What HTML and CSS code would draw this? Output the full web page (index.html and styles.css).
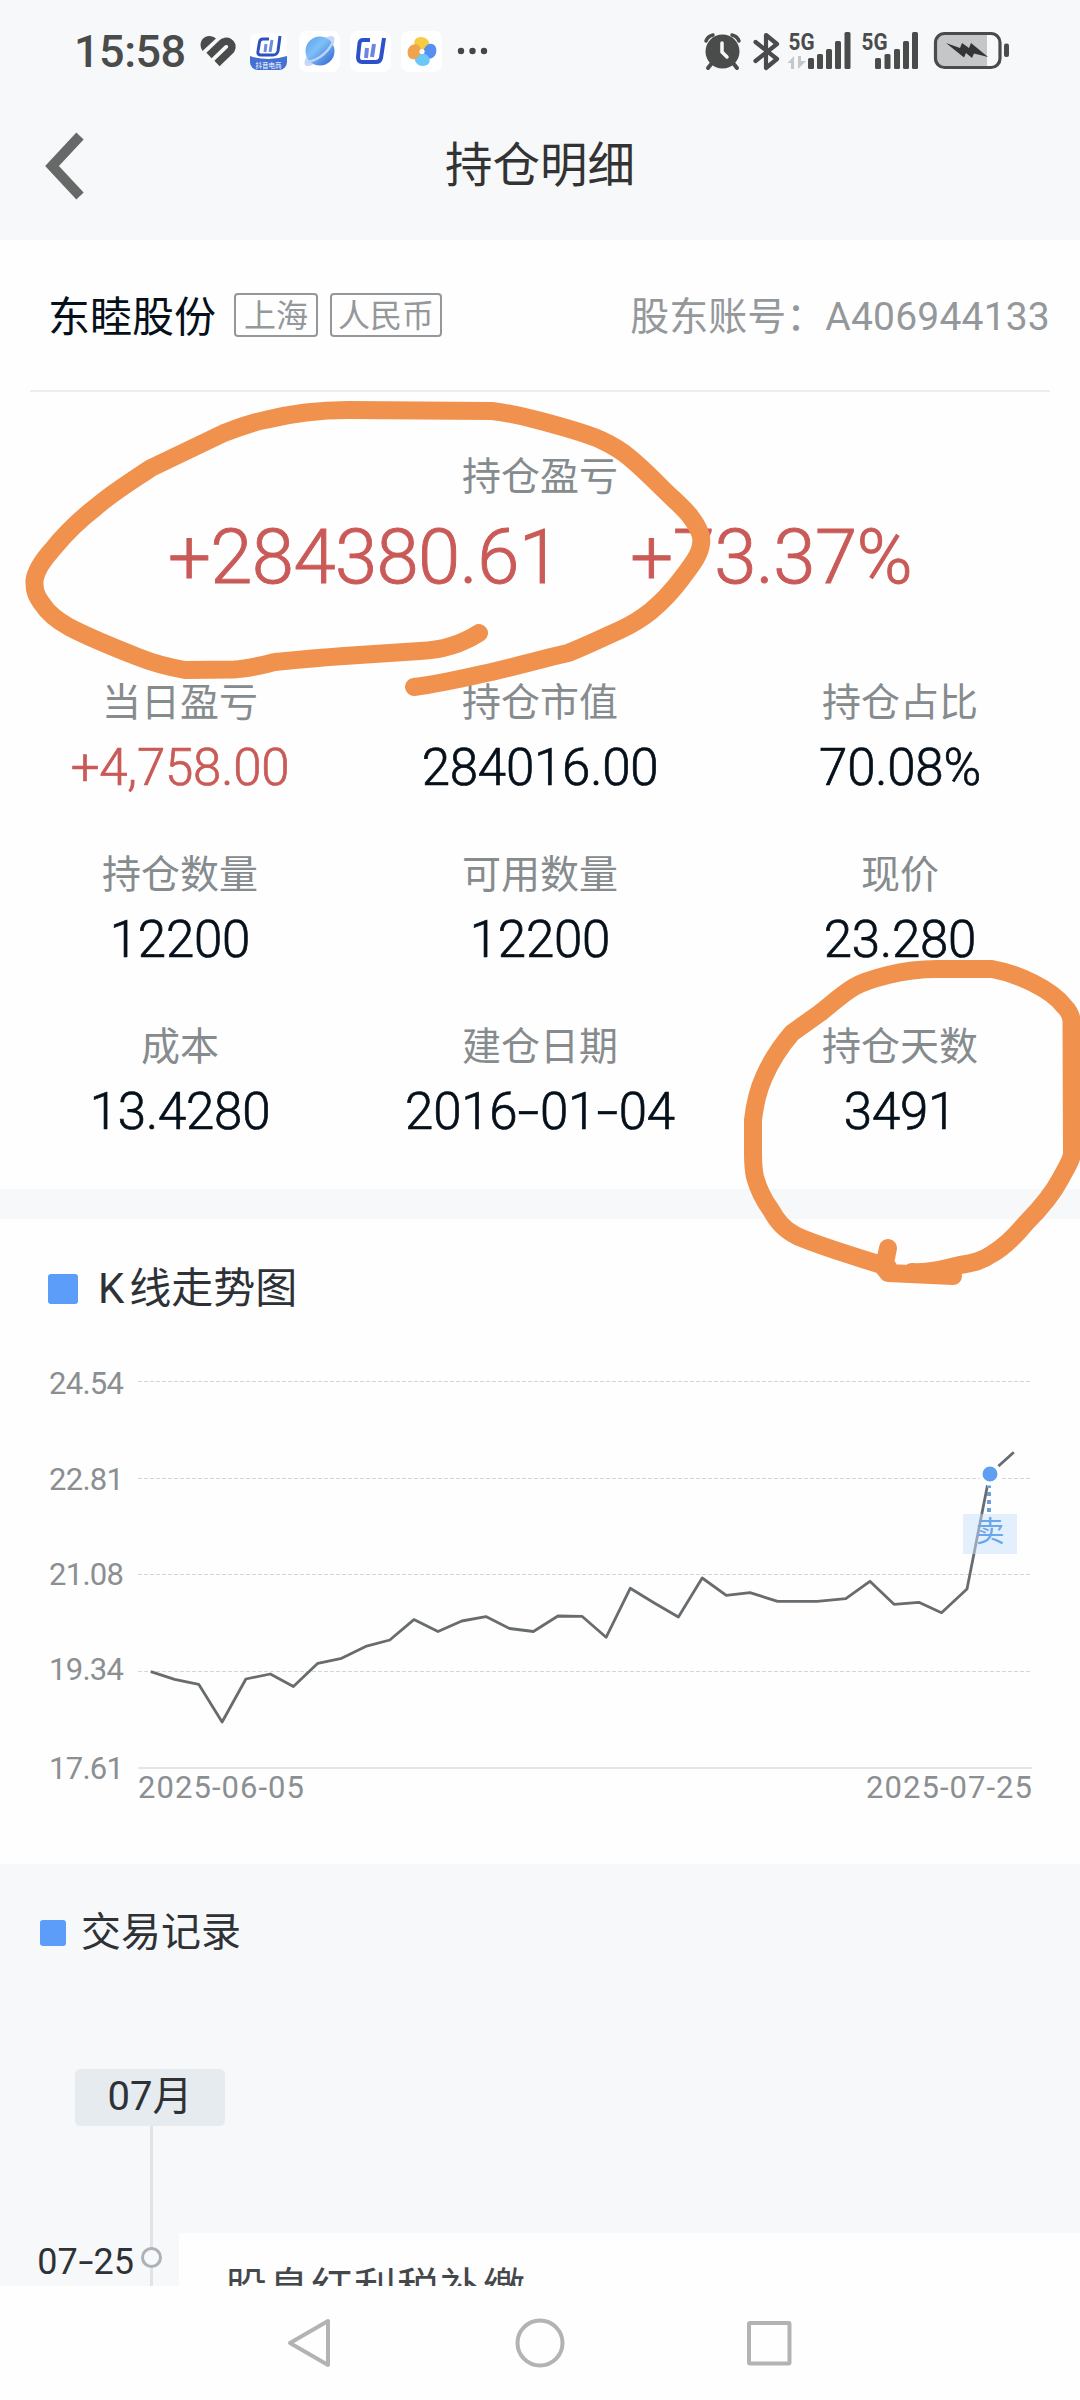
FILE: index.html
```
<!DOCTYPE html>
<html lang="zh-CN">
<head>
    <meta charset="UTF-8">
    <meta name="viewport" content="width=device-width, initial-scale=1.0">
    <title>持仓明细</title>
    <link rel="stylesheet" href="styles.css">
</head>
<body>

<div class="phone">
    <div class="status-bar">
        <span class="clock">15:58</span>
        <svg class="status-left" width="292" height="44" viewBox="198 29 292 44">
            <defs>
                <linearGradient id="planet" x1="0" y1="0" x2="1" y2="1">
                    <stop offset="0" stop-color="#5ba0ea"/>
                    <stop offset=".4" stop-color="#7fc0f7"/>
                    <stop offset="1" stop-color="#2a62cf"/>
                </linearGradient>
                <clipPath id="shop"><rect x="250" y="33" width="37" height="37" rx="8"/></clipPath>
            </defs>
            <!-- heart -->
            <path d="M209 55.500 L221 44 C226 38 235 43 231 50 L217 63.500" fill="none" stroke="#4a4b4b" stroke-width="7.500"/>
            <path d="M202.500 51 C197.500 43 203 36 209 36 C212 36 214 37 216 38.500 Z" fill="#4a4b4b"/>
            <!-- shop app -->
            <g clip-path="url(#shop)">
                <rect x="250" y="33" width="37" height="37" fill="#fff"/>
                <path d="M250 56 Q268 62 287 56 V70 H250Z" fill="#4470d3"/>
            </g>
            <path d="M269 39 H263 Q260 39 259.500 42 L258 51 Q257 55 261 55 H273 Q277 55 278 51 L280 36" fill="none" stroke="#2d52bd" stroke-width="3"/>
            <path d="M266 44 L265 52 M272 40 L270 52" stroke="#6f8ddd" stroke-width="3"/>
            <text class="shop-name" x="268.500" y="67.500">抖音电商</text>
            <!-- browser app -->
            <rect x="299" y="31" width="41" height="41" rx="8" fill="#fff"/>
            <ellipse cx="319.500" cy="51" rx="20" ry="7" transform="rotate(-45 319.500 51)" fill="#c9d6f6"/>
            <circle cx="320" cy="51" r="14.500" fill="url(#planet)"/>
            <path d="M308 62 Q325 58 333 42" fill="none" stroke="#bcd3fa" stroke-width="2.500"/>
            <!-- work app -->
            <rect x="350" y="31" width="41" height="41" rx="8" fill="#fff"/>
            <path d="M370 40 H363 Q360 40 359.500 43 L358 57 Q358 62 362 62 H376 Q380 62 381 58 L384 38" fill="none" stroke="#2d50cb" stroke-width="4"/>
            <path d="M367 48 L366 58 M374 44 L372 57" stroke="#6b85e0" stroke-width="4"/>
            <!-- pinwheel app -->
            <rect x="401" y="31" width="41" height="41" rx="8" fill="#fff"/>
            <path d="M421 50 C414 48 412 41 417 38 C424 35 431 40 429 47 C427 50 423 51 421 50Z" fill="#f8cb45"/>
            <path d="M421 50 C414 48 412 41 417 38 C424 35 431 40 429 47 C427 50 423 51 421 50Z" transform="rotate(90 422 51.500)" fill="#558ff0"/>
            <path d="M421 50 C414 48 412 41 417 38 C424 35 431 40 429 47 C427 50 423 51 421 50Z" transform="rotate(180 422 51.500)" fill="#6cc8f8"/>
            <path d="M421 50 C414 48 412 41 417 38 C424 35 431 40 429 47 C427 50 423 51 421 50Z" transform="rotate(270 422 51.500)" fill="#f0a34c"/>
            <circle cx="422" cy="51.500" r="2.600" fill="#fff"/>
            <!-- more -->
            <g fill="#454646"><circle cx="461" cy="51" r="3.200"/><circle cx="472.500" cy="51" r="3.200"/><circle cx="484" cy="51" r="3.200"/></g>
        </svg>
        <svg class="status-right" width="310" height="44" viewBox="702 29 310 44">
            <!-- alarm -->
            <g fill="none" stroke="#4a4b4b" stroke-width="4" stroke-linecap="round">
                <path d="M712 63 L708 68 M733 63 L737 68"/>
                <path d="M706 41 Q708 36 713 35 M732 35 Q737 36 739 41" stroke-width="3.500"/>
            </g>
            <circle cx="722.500" cy="51.500" r="17" fill="#4a4b4b"/>
            <path d="M722 43 V52 L727 57" fill="none" stroke="#f6f7f9" stroke-width="3.500" stroke-linecap="round"/>
            <!-- bluetooth -->
            <path d="M755.500 42 L777 59 L766 68 V35 L777 44 L755.500 61" fill="none" stroke="#4a4b4b" stroke-width="4.200" stroke-linejoin="round" stroke-linecap="round"/>
            <!-- signal -->
            <g class="signal">
                <text x="788.500" y="50" textLength="26" lengthAdjust="spacingAndGlyphs">5G</text>
                <text x="861.500" y="50" textLength="26" lengthAdjust="spacingAndGlyphs">5G</text>
                <rect x="808" y="58" width="6" height="11" rx="1.500"/>
                <rect x="817" y="54" width="6" height="15" rx="1.500"/>
                <rect x="826" y="49" width="6" height="20" rx="1.500"/>
                <rect x="835" y="41" width="6" height="28" rx="1.500"/>
                <rect x="844.500" y="32" width="6" height="37" rx="1.500"/>
                <rect x="875" y="58" width="6" height="11" rx="1.500"/>
                <rect x="884.500" y="54" width="6" height="15" rx="1.500"/>
                <rect x="894" y="49" width="6" height="20" rx="1.500"/>
                <rect x="903" y="41" width="6" height="28" rx="1.500"/>
                <rect x="912" y="32" width="6" height="37" rx="1.500"/>
            </g>
            <path d="M787.500 63 L794 56 V69 H791 V63Z M798 56 H801 V61 H806 L798 69Z" fill="#c5c6c7"/>
            <!-- battery -->
            <path d="M945 33.500 H987 V67.500 H945 Q936 67.500 936 58 V43 Q936 33.500 945 33.500Z" fill="#c5c6c7"/>
            <rect x="935.500" y="33.500" width="64.500" height="34" rx="9" fill="none" stroke="#4a4b4b" stroke-width="3.200"/>
            <rect x="1004" y="43.500" width="5" height="13.500" rx="2" fill="#4a4b4b"/>
            <path d="M946 43 L960 48 L962 43 L969 48 L971 43 L988 57 L974 53.500 L972 58 L966 53 L964 57.500Z" fill="#343535"/>
        </svg>
    </div>

    <div class="header">
        <svg class="back" width="46" height="70" viewBox="-4 0 46 70">
            <path d="M36 5 L8 35 L36 65" fill="none" stroke="#676868" stroke-width="10"/>
        </svg>
        <h1>持仓明细</h1>
    </div>

    <div class="summary">
        <div class="stock">
            <span class="stock-name">东睦股份</span>
            <span class="tag">上海</span>
            <span class="tag">人民币</span>
            <span class="account">股东账号：<span class="account-no">A406944133</span></span>
        </div>
        <div class="total">
            <div class="label">持仓盈亏</div>
            <div class="total-values">
                <span class="amount">+284380.61</span>
                <span class="percent">+73.37%</span>
            </div>
        </div>
        <div class="stats">
            <div class="stat"><div class="label">当日盈亏</div><div class="value up">+4,758.00</div></div>
            <div class="stat"><div class="label">持仓市值</div><div class="value">284016.00</div></div>
            <div class="stat"><div class="label">持仓占比</div><div class="value">70.08%</div></div>
            <div class="stat"><div class="label">持仓数量</div><div class="value">12200</div></div>
            <div class="stat"><div class="label">可用数量</div><div class="value">12200</div></div>
            <div class="stat"><div class="label">现价</div><div class="value">23.280</div></div>
            <div class="stat"><div class="label">成本</div><div class="value">13.4280</div></div>
            <div class="stat"><div class="label">建仓日期</div><div class="value">2016<i class="dash">-</i>01<i class="dash">-</i>04</div></div>
            <div class="stat"><div class="label">持仓天数</div><div class="value">3491</div></div>
        </div>
    </div>

    <div class="chart-card">
        <h2 class="chart-title"><span class="latin">K</span>线走势图</h2>
        <svg class="chart" width="1080" height="470" viewBox="0 1350 1080 470">
            <g class="grid-lines">
                <path d="M138 1381.500 H1030"/>
                <path d="M138 1478.500 H1030"/>
                <path d="M138 1574.500 H1030"/>
                <path d="M138 1671.500 H1030"/>
            </g>
            <path class="axis" d="M138 1768 H1032"/>
            <g class="axis-text">
                <text x="49" y="1393.500" textLength="75">24.54</text>
                <text x="49" y="1490" textLength="75">22.81</text>
                <text x="49" y="1584.500" textLength="75">21.08</text>
                <text x="49" y="1680" textLength="75">19.34</text>
                <text x="49" y="1779" textLength="75">17.61</text>
                <text x="138" y="1798" textLength="166">2025-06-05</text>
                <text x="866" y="1798" textLength="166">2025-07-25</text>
            </g>
            <polyline class="price" points="150.800,1671.700 174.600,1679.300 198.700,1684.300 222.100,1722 245.900,1679 270.300,1674 293.400,1686.500 317.800,1663.300 341.600,1658.300 365.700,1646.400 389.800,1640 413.900,1619.600 438,1631.500 461.800,1621 485.900,1616.600 509.600,1628.500 533.400,1631.500 557.900,1616 582,1616.300 606.100,1637.300 630.200,1588.300 654.300,1603 678.400,1617 702.200,1578 726.300,1595.300 750,1592.700 777.600,1601.300 817.200,1601.300 845.800,1598.700 869.900,1581.300 894,1604.300 918.800,1602.300 941.500,1612.700 967,1589 989.700,1474 1013.800,1452.300"/>
            <rect x="963" y="1514" width="54" height="40" fill="#c8e0fa" fill-opacity=".5"/>
            <path d="M989 1484 V1513" stroke="#6a9fdc" stroke-width="4" stroke-dasharray="4 4"/>
            <circle cx="990" cy="1474" r="9.500" fill="#5f9ff0" stroke="#fff" stroke-width="4"/>
            <text class="sell" x="990" y="1542">卖</text>
        </svg>
    </div>

    <div class="records">
        <h2 class="records-title">交易记录</h2>
        <div class="month">07月</div>
        <div class="timeline">
            <div class="record-date">07<i class="dash">-</i>25</div>
            <div class="rail"><span class="node"></span></div>
            <div class="record">股息红利税补缴</div>
        </div>
    </div>

    <div class="nav-bar">
        <svg width="1080" height="114" viewBox="0 2286 1080 114" fill="none" stroke="#b3b3b3" stroke-width="4" stroke-linejoin="round">
            <path d="M290 2343 L328 2321 V2365Z"/>
            <circle cx="540" cy="2343" r="22.500"/>
            <rect x="749" y="2323" width="40.500" height="40.500" rx="1"/>
        </svg>
    </div>

    <!-- hand drawn marks -->
    <svg class="marks" width="1080" height="2400" viewBox="0 0 1080 2400">
        <path d="M479 633 C465 642 445 650 420 651 L344 656 C315 658 295 660 275 662 C258 666 248 669 234 669.500 L185 670 C168 667 153 663 138 657 C110 646 86 636 69 627 C55 619 48 613 43 605 C36 596 34 590 34.500 580 C36 571 43 560 52 550 C64 535 79 520 96 507 C112 493 133 480 151 468 L224 433 C240 427 250 423 265 420 C285 415 317 410 348 410 L492 411 C508 413 522 416 537 420 C560 426 582 432 599 439 C612 445 621 450 630 458 C641 467 652 478 661 487 C673 499 684 508 690 516 C697 525 703 535 701 544 C700 555 691 566 682 578 C673 590 663 601 651 611 C641 619 631 625 620 630 C602 638 586 646 568 653 L551 657 C528 663 505 669 482 674 C460 679 438 684 414 687"/>
        <path d="M888 1248 L884 1268 L888 1273 L953 1276 M888 1267 C857 1257 825 1248 799 1237 C784 1230 777 1221 771 1210 C763 1199 758 1188 755 1177 C753 1168 753 1162 753 1153 L753 1120 C755 1103 758 1090 764 1077 C771 1061 780 1047 792 1033 L820 1013 C833 1003 842 994 854 987 C864 981 876 978 888 975 C904 971 922 969 937 969 L992 969 C1009 972 1021 977 1033 983 C1047 990 1058 998 1064 1006 C1069 1011 1071 1015 1071.500 1020 L1072 1155 C1070 1163 1065 1170 1061 1178 C1052 1195 1040 1209 1026 1223 C1016 1235 1006 1246 992 1254 C982 1261 973 1263 960 1265 C944 1269 928 1273 912 1272"/>
    </svg>
</div>

</body>
</html>
```

FILE: styles.css
```
* {
    box-sizing: border-box;
}

body {
    margin: 0;
    font-family: Roboto, "Noto Sans CJK SC", sans-serif;
    background-color: #fefefe;
    color: #2e3236;
}

h1, h2 {
    margin: 0;
    font-weight: 400;
}

svg {
    display: block;
    flex-shrink: 0;
}

.phone {
    position: relative;
    width: 1080px;
    height: 2400px;
    display: flex;
    flex-direction: column;
    overflow: hidden;
}

.status-bar {
    height: 102px;
    padding: 0 68px 0 74px;
    display: flex;
    align-items: center;
    background-color: #f7f8fa;
}

.clock {
    width: 124px;
    font-size: 45px;
    font-weight: 500;
    letter-spacing: -0.5px;
    color: #4a4b4b;
}

.status-right {
    margin-left: auto;
}

.shop-name {
    font-size: 6.5px;
    fill: #fff;
    text-anchor: middle;
}

.signal {
    fill: #4a4b4b;
    font-size: 24px;
    font-weight: 700;
}

.header {
    height: 138px;
    padding: 0 40px 10px;
    display: grid;
    grid-template-columns: 1fr auto 1fr;
    align-items: center;
    background-color: #f7f8fa;
}

.header h1 {
    font-size: 47.5px;
    line-height: 70px;
    color: #333;
}

.summary {
    height: 949px;
}

.stock {
    height: 152px;
    margin: 0 30px;
    padding-left: 18px;
    display: flex;
    align-items: center;
    border-bottom: 2px solid #eceeef;
}

.stock-name {
    margin: -4px 18px 0 0;
    font-size: 42px;
    color: #06101a;
}

.tag {
    height: 44px;
    margin-right: 12px;
    padding: 0 8px;
    border: 2px solid #94989b;
    border-radius: 4px;
    font-size: 32px;
    line-height: 42px;
    color: #94989b;
}

.tag + .tag {
    padding: 0 6px;
}

.account {
    margin: -5px 0 0 auto;
    font-size: 39px;
    color: #94989b;
}

.account-no {
    letter-spacing: 0.2px;
}

.total {
    height: 281px;
    padding-top: 55px;
    text-align: center;
}

.label {
    font-size: 39px;
    line-height: 60px;
    color: #868b8e;
}

.total-values {
    display: flex;
    justify-content: center;
    gap: 70px;
    font-size: 76px;
    font-weight: 300;
    line-height: 100px;
    letter-spacing: -0.6px;
    color: #c95a57;
    -webkit-text-stroke: 0.9px #c95a57;
}

.stats {
    display: grid;
    grid-template-columns: repeat(3, 1fr);
    text-align: center;
}

.stat {
    height: 172px;
}

.value {
    font-size: 51px;
    font-weight: 300;
    line-height: 70px;
    letter-spacing: -0.2px;
    color: #06101a;
    -webkit-text-stroke: 0.7px #06101a;
}

.up {
    color: #c95a57;
    -webkit-text-stroke-color: #c95a57;
}

.dash {
    display: inline-block;
    margin: 0 0.08em;
    font-style: normal;
    transform: scaleX(1.5);
}

.chart-card {
    height: 675px;
    border-top: 30px solid #f7f8fa;
}

.chart-title, .records-title {
    display: flex;
    align-items: center;
    font-size: 42px;
    line-height: 60px;
}

.chart-title {
    height: 131px;
    padding: 8px 0 0 48px;
}

.latin {
    margin-right: 5px;
}

.chart-title::before, .records-title::before {
    content: "";
    width: 30px;
    height: 30px;
    margin-right: 20px;
    border-radius: 3px;
    background-color: #5b9df9;
}

.grid-lines {
    stroke: #d4d7d8;
    stroke-width: 1;
    stroke-dasharray: 4 2;
}

.axis {
    stroke: #e2e6e7;
    stroke-width: 2;
}

.axis-text {
    font-size: 31px;
    fill: #8b8f92;
}

.price {
    fill: none;
    stroke: #686c6f;
    stroke-width: 2.8;
    stroke-linejoin: round;
}

.sell {
    font-size: 29px;
    fill: #6ba5ea;
    text-anchor: middle;
}

.records {
    height: 422px;
    overflow: hidden;
    background-color: #f7f8fa;
}

.records-title {
    height: 205px;
    padding: 0 0 67px 40px;
    font-size: 40px;
}

.records-title::before {
    width: 26px;
    height: 26px;
    margin-right: 15px;
}

.month {
    width: 150px;
    height: 57px;
    margin-left: 75px;
    border-radius: 5px;
    background-color: #e6ebef;
    font-size: 40px;
    line-height: 56px;
    text-align: center;
}

.timeline {
    height: 160px;
    display: flex;
}

.record-date {
    width: 137px;
    padding: 111px 3px 0 0;
    font-size: 36px;
    line-height: 50px;
    text-align: right;
    white-space: nowrap;
}

.rail {
    width: 42px;
    padding: 121px 0 0 4px;
    background: linear-gradient(#e0e4e6, #e0e4e6) 13px 0 / 3px 100% no-repeat;
}

.node {
    display: block;
    width: 21px;
    height: 21px;
    border: 3px solid #adb2b6;
    border-radius: 50%;
    background-color: #f7f8fa;
}

.record {
    flex: 1;
    margin-top: 107px;
    padding: 26px 0 0 46px;
    font-size: 42px;
    line-height: 60px;
    letter-spacing: 1px;
    white-space: nowrap;
    background-color: #fefefe;
    color: #45484b;
}

.nav-bar {
    height: 114px;
    background-color: #fefefe;
}

.marks {
    position: absolute;
    top: 0;
    left: 0;
    fill: none;
    stroke: #f0924d;
    stroke-width: 18;
    stroke-linecap: round;
    stroke-linejoin: round;
}
```
